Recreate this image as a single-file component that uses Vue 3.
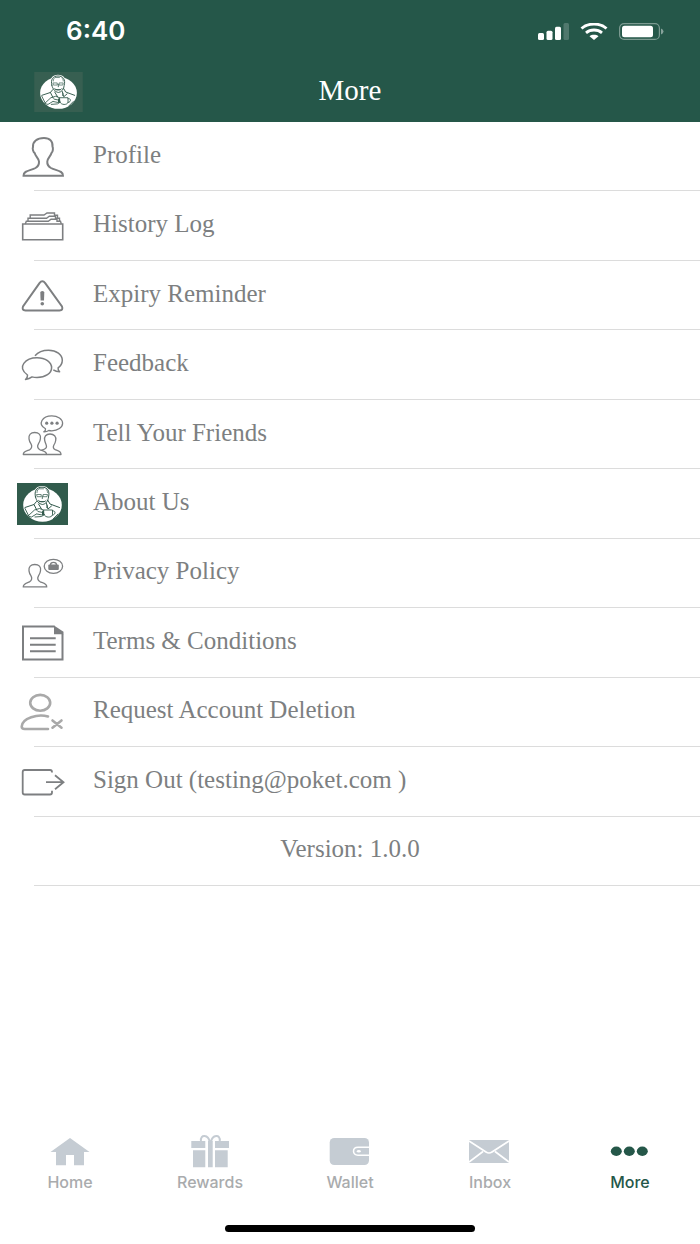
<template>
  <div class="app">
    <svg class="sprite" aria-hidden="true">
      <symbol id="logo" viewBox="0 0 51 42">
        <rect width="51" height="42" fill="currentColor" />
        <ellipse cx="25.5" cy="22" rx="19.3" ry="16.7" fill="#fff" />
        <path d="M17.5 15C16 7 19 3 25 3s9 4 7.500 12z" fill="#fff" />
        <g fill="none" stroke="#31594b" stroke-linecap="round" stroke-linejoin="round">
          <path d="M18.5 14C17 8 19.500 4.200 25 4.200S33 8 31.500 14c-.4 4-2.500 7-6 7.500-3.500-.5-6-3.500-7-7.500" stroke-width="1" />
          <path d="M20 9.500c0-2 1-3.500 2-3.800M30.500 9.500c0-1.500-.5-2.500-1.500-3.300M22.500 5.800h4" stroke-width=".7" />
          <path d="M20 11.500h4.200v2.200h-3.700zM26.500 11.500h4l-.5 2.200h-3.500z" stroke-width=".7" />
          <path d="M25.300 13v2.500M21.500 17.500c1.500 2 6 2 7.500 0M22.500 18.500h5" stroke-width=".9" />
          <path d="M19.500 18.500L17 21.500 8 24.500M17 21.500l3 6M31 17.500l2 3.500 9.500 3.500M29.500 20.500l1.500 5.500 3.500-3M21.500 21l3 5" stroke-width="1" />
          <path d="M8 25.500l4 8 2.500.5 5-3M11 33l6.500-6 5-1.500 4 1.500M18 34l6.500-.5 3-2M20 31l5 1M21 28.500l4.500 1" stroke-width=".9" />
          <path d="M27 27h8.500v4.500c0 3-7 4-8.500 0zM35.500 28c3.500-1 3.500 4 0 4M30 25c-1.500-1 1-1.500 0-3M36 36l5-5" stroke-width=".9" />
          <path d="M26 28.500v3" stroke-width="2" />
        </g>
      </symbol>
      <symbol id="profile" viewBox="0 0 51 50">
        <path d="M27 6C20 6 15.500 9.500 16 15c-.8 1.500.2 5 1.700 6 .8 3.500 4 5 4.300 8.500.2 3-1 5-3.500 6.500C14 38.500 6 38.500 6.500 43.800H46c.5-5.300-7.500-5.300-12-7.800-2.500-1.500-4-3.500-3.700-6.500.3-3.500 3.200-5 4.200-8.500 1.500-1 1.800-5 1-6.500C36 9.500 33 6 27 6Z" fill="none" stroke="currentColor" stroke-width="2" />
      </symbol>
      <symbol id="history" viewBox="0 0 51 50">
        <g fill="none" stroke="currentColor" stroke-width="1.400">
          <path d="M5.700 23h40v15.700h-40z" stroke-width="1.600" />
          <path d="M13.200 17.300V14H27l3-2h7.500v2.300h3v3" />
          <path d="M11 20.300v-3h18.500l2.800-2h6.200v2h4v3.300" />
          <path d="M8.300 23l1-2.700h22l2.700-2h6v2h3.500l.8 2.700" />
        </g>
      </symbol>
      <symbol id="expiry" viewBox="0 0 51 50">
        <path d="M22.500 12.200Q25.300 8.500 28.200 12.200L45 35.500Q46.500 39.300 42.500 39.500H8.500Q4.500 39.300 6 35.500Z" fill="none" stroke="currentColor" stroke-width="2" />
        <path d="M23.300 21.500q0-1.500 2-1.500t2 1.500l-.3 8h-3.400z" fill="currentColor" />
        <circle cx="25.300" cy="32.700" r="1.800" fill="currentColor" />
      </symbol>
      <symbol id="feedback" viewBox="0 0 51 50">
        <g fill="none" stroke="currentColor" stroke-width="1.500" stroke-linejoin="round">
          <path d="M10.500 35C-1 27 9 17.700 20 17.700c8.500 0 14.600 4.300 14.600 10s-6.100 9.800-14.600 9.800c-2 0-3.500-.2-5-.6-2 1.600-4 2.300-6.500 2.600 1.500-1.200 2.200-2.500 2-4.500Z" />
          <path d="M18 15.700c3-3.500 8-5.400 13.500-5.400 8 0 13.800 4.200 13.800 10 0 3-1.500 5.700-4.200 7.500-.2 1.500.3 2.800 1.500 3.900-2.500 0-4.500-.6-6.300-1.800" />
        </g>
      </symbol>
      <symbol id="friends" viewBox="0 0 51 50">
        <g fill="none" stroke="currentColor" stroke-width="1.300" stroke-linejoin="round">
          <path d="M28.500 18.800C20 14 25.500 5.800 34.800 5.800c6 0 10.800 3.400 10.800 7.500s-4.800 7.500-10.800 7.500c-1 0-2-.1-3-.3-1.500 1-3 1.400-5 1.300 1.500-1 2-1.800 1.700-3Z" />
          <path d="M29.500 44.500H6.300c-.2-3.300 3.700-3.700 6.200-4.700 2.500-1.200 2.700-4 1.500-6-1.500-2-1.700-2.500-2-5-.5-4 1.700-6.300 5.700-6.300s6.500 2.300 5.700 6.300c-.2 2.500-.7 3.200-2 5-1.200 2-.7 4.500 1.600 6 2.500 1 6.800 1.500 6.500 4.700Z" />
          <path d="M24.500 40.200c2.500-.6 5-1.200 5-3.700 0-2-1.200-3-1.800-6-.8-4 1.300-6.500 5.300-6.500s6.500 2.500 5.700 6.500c-.3 2-.7 2.800-1.800 4.500-1 2-.6 3.700 1.300 4.700 2.500 1 6 1.500 5.800 4.800H29.500" />
        </g>
        <g fill="currentColor">
          <circle cx="29.700" cy="13.200" r="1.600" />
          <circle cx="34.900" cy="13.200" r="1.600" />
          <circle cx="40.100" cy="13.200" r="1.600" />
        </g>
      </symbol>
      <symbol id="privacy" viewBox="0 0 51 50">
        <g fill="none" stroke="currentColor" stroke-width="1.300">
          <path d="M29.700 38.800H6.300c-.2-3.400 3.700-3.800 6.200-5 2.500-1.200 2.700-4 1.500-6-1.500-2-1.700-2.500-2-5-.5-4 1.700-6.300 5.800-6.300s6.500 2.300 5.700 6.300c-.2 2.500-.7 3.200-2 5-1.200 2-.7 4.500 1.700 6 2.500 1 6.800 1.600 6.500 5Z" />
          <ellipse cx="36.400" cy="18.300" rx="9.200" ry="7" />
          <path d="M33.500 17c0-3.500 6-3.500 6 0" />
        </g>
        <rect x="31.300" y="16.500" width="10.500" height="5.500" rx="1" fill="currentColor" />
      </symbol>
      <symbol id="terms" viewBox="0 0 51 50">
        <path d="M37.500 8.500H6v33H45.500V16M13 20.300h25.700M13 26.700h25.700M13 33.300h25.700" fill="none" stroke="currentColor" stroke-width="2" />
        <path d="M37 7.500l9.500 6.200v2.500H37z" fill="currentColor" />
      </symbol>
      <symbol id="deletion" viewBox="0 0 51 50">
        <g fill="none" stroke="#a9a9a9" stroke-width="2.600" stroke-linecap="round">
          <ellipse cx="23.200" cy="15.800" rx="10" ry="7.900" />
          <path d="M31 29.500C21 26.500 5 31 4.700 39.500q0 2.500 3 2.500H31M35.500 33.500l9 7.200M44.500 33.500l-9 7.200" />
        </g>
      </symbol>
      <symbol id="signout" viewBox="0 0 51 50">
        <path d="M35 15.500v-.5q0-2-2-2H7.700q-2 0-2 2v20.500q0 2 2 2H33q2 0 2-2v-1.700M29 25.200h17M38 18.300l8.500 6.900-8.500 7" fill="none" stroke="currentColor" stroke-width="1.800" />
      </symbol>

      <symbol id="home" viewBox="0 0 42 36">
        <path d="M21 5l19.500 14H35v13.300H25V22h-8v10.300H7V19H1.500Z" fill="currentColor" />
      </symbol>
      <symbol id="rewards" viewBox="0 0 42 36">
        <path d="M2.300 8h14v7h-14zM26 8h14v7H26zM4 17.300h12.300v17H4zM26 17.300h12.700v17H26zM19 8h4.700v26.300H19z" fill="currentColor" />
        <path d="M12 8c-1-7 7.500-6.500 8.700 1M30.700 8c1-7-7.500-6.500-8.700 1" fill="none" stroke="currentColor" stroke-width="2" />
      </symbol>
      <symbol id="wallet" viewBox="0 0 42 36">
        <rect x=".7" y="5" width="39.300" height="27" rx="4.500" fill="currentColor" />
        <path d="M40 14.200H29c-6 0-6 8 0 8h11" fill="none" stroke="#fff" stroke-width="1.500" />
        <ellipse cx="29.800" cy="18.300" rx="2" ry="1.200" fill="#fff" />
      </symbol>
      <symbol id="inbox" viewBox="0 0 42 36">
        <rect y="7" width="40" height="23" rx="1" fill="currentColor" />
        <path d="M0 8l17 11q3 2 6 0L40 8M0 29l14-10.500M40 29L26 18.500" fill="none" stroke="#fff" stroke-width="1.700" />
      </symbol>
      <symbol id="more" viewBox="0 0 42 36">
        <g fill="currentColor">
          <ellipse cx="7.300" cy="18.300" rx="5.500" ry="4.700" />
          <ellipse cx="20.300" cy="18.300" rx="5.500" ry="4.700" />
          <ellipse cx="33.300" cy="18.300" rx="5.500" ry="4.700" />
        </g>
      </symbol>
    </svg>

    <header class="header">
      <div class="status-bar">
        <span class="time">6:40</span>
        <div class="status-icons">
          <svg width="31" height="17" viewBox="0 0 31 17" fill="#fff">
            <rect y="10" width="6" height="7" rx="1.500" />
            <rect x="8.500" y="7.700" width="6" height="9.300" rx="1.500" />
            <rect x="17" y="3.700" width="6" height="13.300" rx="1.500" />
            <rect x="25.500" width="5.500" height="17" rx="1.500" opacity=".2" />
          </svg>
          <svg width="28" height="17" viewBox="0 0 28 17">
            <path d="M1.500 5.500C8-.4 20-.4 26.500 5.500M6 9.800c4.500-3.700 11.500-3.700 16 0" fill="none" stroke="#fff" stroke-width="2.900" />
            <path d="M9.500 13.200c2.500-1.900 6.500-1.900 9 0L14 17z" fill="#fff" />
          </svg>
          <svg width="45" height="17" viewBox="0 0 45 17">
            <rect x=".6" y=".6" width="39.800" height="15.800" rx="4.500" fill="none" stroke="#fff" stroke-opacity=".4" stroke-width="1.200" />
            <rect x="3" y="2.800" width="31" height="11.400" rx="2.500" fill="#fff" />
            <path d="M42 5.500q2.500 1 2.500 3T42 11.500z" fill="#fff" opacity=".45" />
          </svg>
        </div>
      </div>
      <div class="title-bar">
        <svg class="brand" aria-label="Logo"><use href="#logo" /></svg>
        <h1 class="title">More</h1>
      </div>
    </header>

    <main class="content">
      <ul class="menu">
        <li v-for="item in items" :key="item.icon" class="row">
          <button type="button" class="menu-item">
            <svg class="menu-icon" :class="item.icon" aria-hidden="true">
              <use :href="`#${item.icon}`" />
            </svg>
            <span class="menu-label">{{ item.label }}</span>
          </button>
        </li>
        <li class="row version">
          <span class="menu-label">Version: {{ version }}</span>
        </li>
      </ul>
    </main>

    <footer class="footer">
      <nav class="tabs">
        <a
          v-for="tab in tabs"
          :key="tab.icon"
          href="#"
          class="tab"
          :class="{ active: tab.icon === activeTab }"
          @click.prevent="activeTab = tab.icon"
        >
          <svg class="tab-icon" aria-hidden="true"><use :href="`#${tab.icon}`" /></svg>
          <span>{{ tab.label }}</span>
        </a>
      </nav>
      <div class="home-indicator" />
    </footer>
  </div>
</template>

<script setup>
import { ref } from 'vue';

const version = '1.0.0';
const email = 'testing@poket.com';

const items = [
  { icon: 'profile', label: 'Profile' },
  { icon: 'history', label: 'History Log' },
  { icon: 'expiry', label: 'Expiry Reminder' },
  { icon: 'feedback', label: 'Feedback' },
  { icon: 'friends', label: 'Tell Your Friends' },
  { icon: 'logo', label: 'About Us' },
  { icon: 'privacy', label: 'Privacy Policy' },
  { icon: 'terms', label: 'Terms & Conditions' },
  { icon: 'deletion', label: 'Request Account Deletion' },
  { icon: 'signout', label: `Sign Out (${email} )` },
];

const tabs = [
  { icon: 'home', label: 'Home' },
  { icon: 'rewards', label: 'Rewards' },
  { icon: 'wallet', label: 'Wallet' },
  { icon: 'inbox', label: 'Inbox' },
  { icon: 'more', label: 'More' },
];

const activeTab = ref('more');
</script>

<style>
body {
  margin: 0;
  background: #fff;
}
</style>

<style scoped>
.app {
  display: flex;
  flex-direction: column;
  min-height: 100vh;
  font-family: 'Liberation Serif', serif;
  color: #7d7f81;
}

.sprite {
  display: none;
}

.header {
  background: #255749;
  color: #fff;
}

.status-bar {
  display: flex;
  align-items: center;
  justify-content: space-between;
  height: 62px;
  padding: 0 36px 0 66px;
}

.time {
  font-family: Inter, sans-serif;
  font-size: 26px;
  font-weight: 600;
  line-height: 32px;
}

.status-icons {
  display: flex;
  gap: 11px;
}

.title-bar {
  display: grid;
  grid-template-columns: 1fr auto 1fr;
  align-items: center;
  height: 60px;
  padding: 0 34px;
}

.brand {
  width: 49px;
  height: 40px;
  color: #375f51;
}

.title {
  margin: 0;
  padding-bottom: 4px;
  font-size: 29px;
  font-weight: 400;
  line-height: 32px;
}

.content {
  flex: 1;
}

.menu {
  display: grid;
  grid-auto-rows: 1fr;
  min-height: 764px;
  margin: 0;
  padding: 0;
  list-style: none;
}

/* hairline starts inset from the left edge */
.row {
  display: flex;
  background: linear-gradient(#dcdcdc, #dcdcdc) 34px 100% / 100% 1px no-repeat;
}

.menu-item {
  display: flex;
  flex: 1;
  align-items: center;
  gap: 25px;
  padding: 0 17px;
  border: 0;
  background: none;
  color: inherit;
  font: inherit;
  text-align: left;
  cursor: pointer;
}

.menu-icon {
  flex: none;
  width: 51px;
  height: 50px;
}

.menu-icon.logo {
  height: 42px;
  color: #315b4c;
}

.menu-label {
  padding-bottom: 4px;
  font-size: 25px;
  line-height: 28px;
}

.version {
  align-items: center;
  justify-content: center;
}

.tabs {
  display: flex;
}

.tab {
  display: flex;
  flex: 1;
  flex-direction: column;
  align-items: center;
  gap: 3px;
  color: #a9abad;
  font-family: Inter, sans-serif;
  font-size: 16px;
  font-weight: 500;
  line-height: 20px;
  text-decoration: none;
}

.tab-icon {
  width: 42px;
  height: 36px;
  color: #c5ccd3;
}

.tab.active,
.tab.active .tab-icon {
  color: #255749;
}

.home-indicator {
  width: 36%;
  max-width: 250px;
  height: 7px;
  margin: 33px auto 12px;
  border-radius: 4px;
  background: #000;
}
</style>
